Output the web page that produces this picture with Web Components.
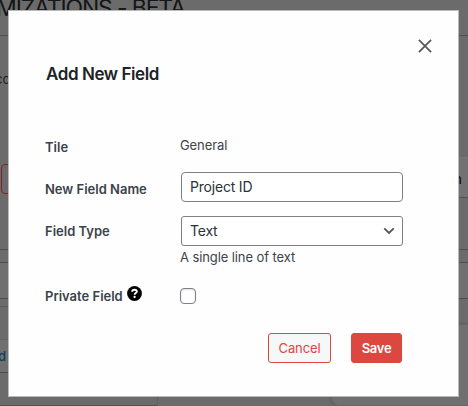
<!DOCTYPE html>
<html lang="en">
<head>
<meta charset="utf-8">
<title>Add New Field</title>
<style>
html,body{margin:0;height:100%;overflow:hidden;background:#6b6b6b;font-family:Inter,"Liberation Sans",sans-serif;font-size:13px;color:#3c434a}
</style>
</head>
<body>
<settings-page></settings-page>
<modal-dialog heading="Add New Field">
  <form-row label="Tile" style="--gap:14px;--h:26px;--dy:2px">General</form-row>
  <form-row label="New Field Name" style="--gap:14px;--h:30px;--dy:2px"><text-box value="Project ID"></text-box></form-row>
  <form-row label="Field Type" style="--gap:0px;--h:30px;--dy:0px"><select-box value="Text"></select-box></form-row>
  <form-row style="--gap:13px;--h:22px">A single line of text</form-row>
  <form-row label="Private Field" help style="--gap:0px;--h:30px;--dy:0px"><check-box></check-box></form-row>
  <action-button slot="actions">Cancel</action-button>
  <action-button slot="actions" primary>Save</action-button>
</modal-dialog>
<script>
const define=(name,html,setup)=>customElements.define(name,class extends HTMLElement{
  constructor(){
    super();
    const t=document.createElement('template');
    t.innerHTML=html;
    this.attachShadow({mode:'open'}).append(t.content.cloneNode(true));
  }
  connectedCallback(){if(setup)setup(this,this.shadowRoot)}
});

define('settings-page',`<style>
:host{display:grid;grid-template-rows:35px 371px;width:468px;height:406px;overflow:hidden}
*{box-sizing:border-box}
h1{margin:-6px 0 0;height:42px;border-bottom:1px solid #505050;font-size:23px;font-weight:400;line-height:28px;white-space:nowrap;color:#141617;text-indent:-4px;letter-spacing:-1.15px}
.cols{display:grid;grid-template-columns:158px 1fr}
.col{display:flex;flex-direction:column}
.left{border-right:1px solid #606060}
.band{background:#707070;border:solid #4e4e4e;border-width:1px 0}
.tabs{height:129px;padding-top:35px;color:#1b1d1f;line-height:18px;text-indent:-5px}
.outline{height:30px;width:70px;margin-left:1px;border:1px solid #7a2522;border-radius:4px}
.cell{height:41px;margin-top:122px;background:#727272;border-top:1px solid #767676;border-bottom:1px solid #515151;padding:12px 0 0 296px;color:#111;line-height:18px;font-weight:500}
.link{color:#0c3f5c;text-indent:-2px;line-height:32px;font-weight:500}
.panel{margin:25px 0 0 173px;height:82px;border:1px solid #666;border-right:0;border-radius:8px 0 0 8px;background:#707070;box-shadow:0 0 3px #4448}
.rule{height:1px;background:#505050}
</style>
<h1>MIZATIONS - BETA</h1>
<div class="cols">
 <div class="col left">
  <div class="tabs">cc</div><div class="outline"></div>
  <div class="rule" style="margin-top:55px"></div>
  <div class="band" style="margin-top:12px;height:37px"></div>
  <div style="margin-top:7px;height:33px;border-top:1px solid #5b5b5b"></div>
  <div class="band link" style="height:34px;border-top-color:#636363">d</div>
  <div class="rule" style="margin-top:32px"></div>
 </div>
 <div class="col">
  <div class="cell">n</div>
  <div class="rule" style="margin-top:51px"></div>
  <div class="band" style="margin-top:12px;height:37px"></div>
  <div class="panel"></div>
 </div>
</div>`);

define('modal-dialog',`<style>
:host{position:absolute;left:8px;top:10px;width:451px;height:387px;box-sizing:border-box;border:1px solid #b9b9b9;background:#fefefe;display:flex;flex-direction:column}
header{display:flex;height:121px;padding:0 26px 0 37px}
h2{flex:1;margin:52px 0 0;font-size:17px;line-height:22px;font-weight:600;color:#1d2327;letter-spacing:-.42px}
svg{width:14px;height:14px;margin-top:28px}
main{padding-left:36px;flex:1}
footer{display:flex;gap:20px;padding:0 56px 33px 0;justify-content:flex-end}
</style>
<header><h2></h2><svg viewBox="0 0 14 14"><path d="M.9.9 13.1 13.1M13.1.9.9 13.1" stroke="#545658" stroke-width="1.7"/></svg></header>
<main><slot></slot></main><footer><slot name="actions"></slot></footer>`,
(e,r)=>r.querySelector('h2').textContent=e.getAttribute('heading'));

define('form-row',`<style>
:host{display:grid;grid-template-columns:135px 1fr;height:var(--h);margin-bottom:var(--gap);align-items:center;line-height:18px;letter-spacing:-.1px}
label{display:flex;gap:4px;font-weight:600;transform:translateY(var(--dy,0px));white-space:nowrap;letter-spacing:0}
svg{width:15px;height:15px;margin-top:-1px}
:host(:not([help])) svg{display:none}
</style><label><span></span><svg viewBox="0 0 15 15"><circle cx="7.5" cy="7.5" r="7.4" fill="#000"/><path d="M5.1 5.8Q5.2 3.8 7.6 3.8T9.8 5.5C9.8 7.1 7.6 6.9 7.6 8.7" fill="none" stroke="#fff" stroke-width="1.9"/><circle cx="7.6" cy="11" r="1.15" fill="#fff"/></svg></label><div><slot></slot></div>`,
(e,r)=>r.querySelector('span').textContent=e.getAttribute('label')||'');

const field=`:host{display:flex;align-items:center;justify-content:space-between;box-sizing:border-box;width:222px;height:30px;margin-left:1px;padding:0 7px 0 8px;border:1px solid #7d8086;border-radius:4px;background:#fff;color:#2c3338;font-size:14px;letter-spacing:-.2px}`;
define('text-box',`<style>${field}</style><span></span>`,(e,r)=>r.querySelector('span').textContent=e.getAttribute('value'));
define('select-box',`<style>${field}:host{border-radius:3px}svg{width:12px;height:8px}</style><span></span><svg viewBox="0 0 12 8"><path d="M1.3 1.3 6 6 10.7 1.3" fill="none" stroke="#50575e" stroke-width="1.9"/></svg>`,(e,r)=>r.querySelector('span').textContent=e.getAttribute('value'));
define('check-box',`<style>:host{display:block;box-sizing:border-box;width:16px;height:16px;border:1px solid #7d8086;border-radius:4px;background:#fff;box-shadow:inset 0 1px 2px #0002}</style>`);
define('action-button',`<style>
:host{display:flex;box-sizing:border-box;align-items:center;justify-content:center;width:63px;height:30px;border:1px solid #dc4840;border-radius:3px;background:#f6f7f7;color:#dc4840;font-size:13px;letter-spacing:-.1px}
:host([primary]){width:51px;background:#dc4840;color:#fff;font-weight:600;letter-spacing:-.3px}
</style><slot></slot>`);
</script>
</body>
</html>
